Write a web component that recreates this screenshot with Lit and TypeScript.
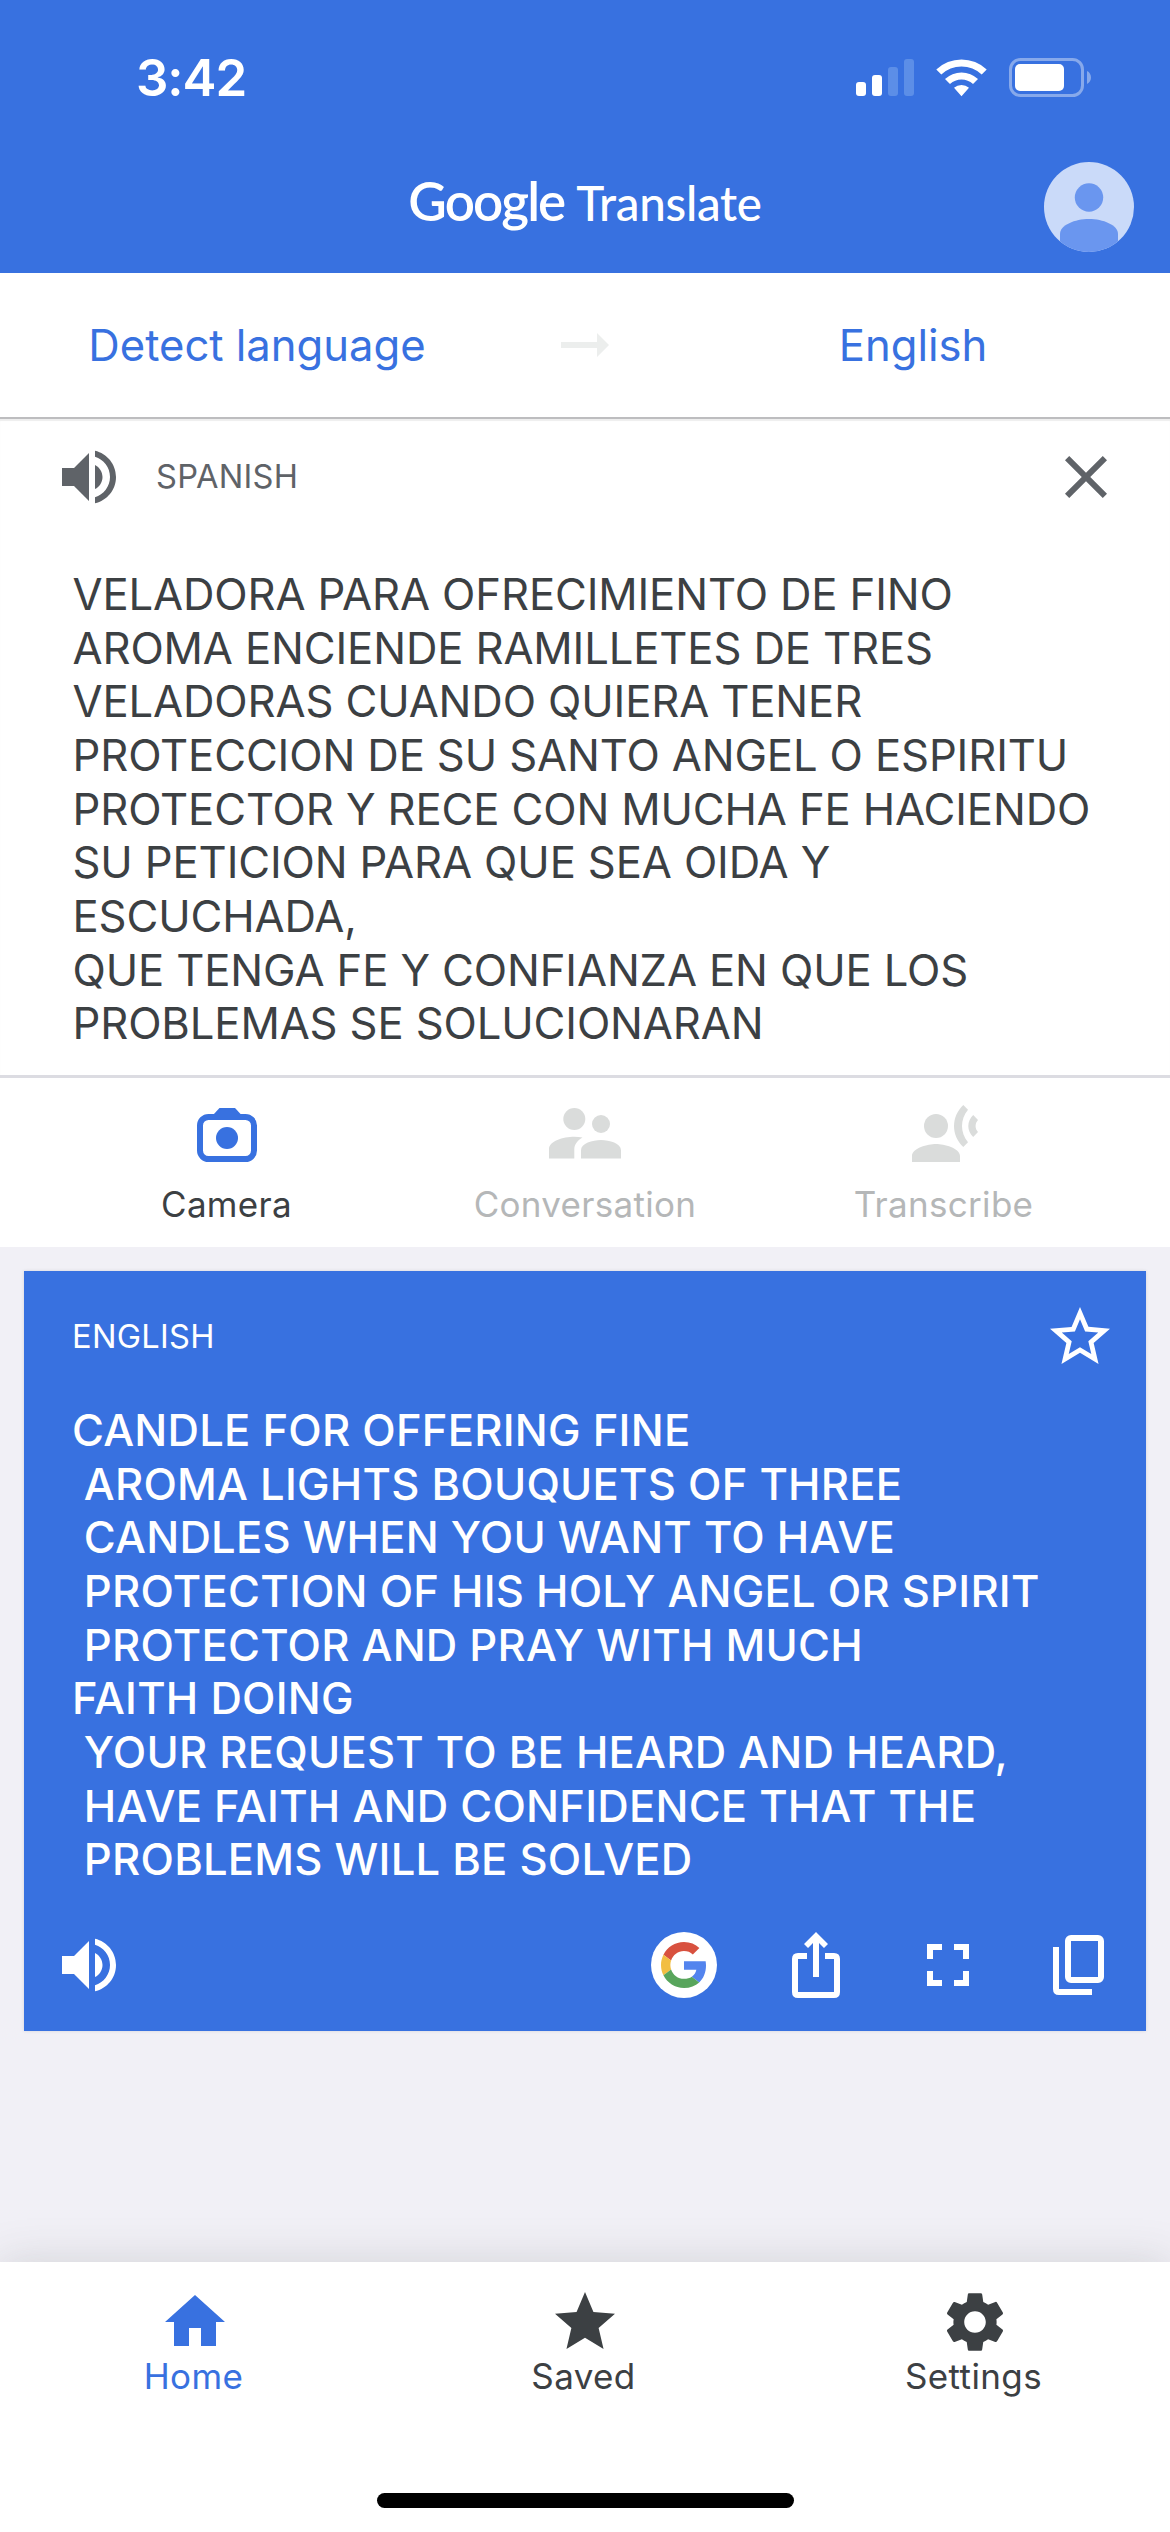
import { LitElement, html, css, svg } from "lit";
import { customElement } from "lit/decorators.js";

const SOURCE_TEXT = [
  "VELADORA PARA OFRECIMIENTO DE FINO",
  "AROMA ENCIENDE RAMILLETES DE TRES",
  "VELADORAS CUANDO QUIERA TENER",
  "PROTECCION DE SU SANTO ANGEL O ESPIRITU",
  "PROTECTOR Y RECE CON MUCHA FE HACIENDO",
  "SU PETICION PARA QUE SEA OIDA Y",
  "ESCUCHADA,",
  "QUE TENGA FE Y CONFIANZA EN QUE LOS",
  "PROBLEMAS SE SOLUCIONARAN",
].join("\n");

const RESULT_TEXT = [
  "CANDLE FOR OFFERING FINE",
  " AROMA LIGHTS BOUQUETS OF THREE",
  " CANDLES WHEN YOU WANT TO HAVE",
  " PROTECTION OF HIS HOLY ANGEL OR SPIRIT",
  " PROTECTOR AND PRAY WITH MUCH",
  "FAITH DOING",
  " YOUR REQUEST TO BE HEARD AND HEARD,",
  " HAVE FAITH AND CONFIDENCE THAT THE",
  " PROBLEMS WILL BE SOLVED",
].join("\n");

const glyph = (body: unknown) =>
  html`<svg class="icon" width="72" height="72" viewBox="0 0 24 24" fill="currentColor">${body}</svg>`;

const speaker = glyph(svg`<path d="M3 9v6h4l5 5V4L7 9H3zm13.5 3c0-1.77-1.02-3.29-2.5-4.03v8.05c1.48-.73 2.5-2.25 2.5-4.02zM14 3.23v2.06c2.89.86 5 3.54 5 6.71s-2.11 5.85-5 6.71v2.06c4.01-.91 7-4.49 7-8.77s-2.99-7.86-7-8.77z"/>`);
const close = glyph(svg`<path d="M19 6.41L17.59 5 12 10.59 6.41 5 5 6.41 10.59 12 5 17.59 6.41 19 12 13.41 17.59 19 19 17.59 13.41 12z"/>`);
const starOutline = glyph(svg`<path d="M22 9.24l-7.19-.62L12 2 9.19 8.63 2 9.24l5.46 4.73L5.82 21 12 17.27 18.18 21l-1.63-7.03L22 9.24zM12 15.4l-3.76 2.27 1-4.28-3.32-2.88 4.38-.38L12 6.1l1.71 4.04 4.38.38-3.32 2.88 1 4.28L12 15.4z"/>`);
const star = glyph(svg`<path d="M12 17.27L18.18 21l-1.64-7.03L22 9.24l-7.19-.61L12 2 9.19 8.63 2 9.24l5.46 4.73L5.82 21z"/>`);
const home = glyph(svg`<path d="M10 20v-6h4v6h5v-8h3L12 3 2 12h3v8z"/>`);
const gear = glyph(svg`<path d="M19.14 12.94c.04-.3.06-.61.06-.94 0-.32-.02-.64-.07-.94l2.03-1.58a.49.49 0 0 0 .12-.61l-1.92-3.32a.488.488 0 0 0-.59-.22l-2.39.96c-.5-.38-1.03-.7-1.62-.94l-.36-2.54a.484.484 0 0 0-.48-.41h-3.84c-.24 0-.43.17-.47.41l-.36 2.54c-.59.24-1.13.57-1.62.94l-2.39-.96c-.22-.08-.47 0-.59.22L2.74 8.87c-.12.21-.08.47.12.61l2.03 1.58c-.05.3-.09.63-.09.94s.02.64.07.94l-2.03 1.58a.49.49 0 0 0-.12.61l1.92 3.32c.12.22.37.29.59.22l2.39-.96c.5.38 1.03.7 1.62.94l.36 2.54c.05.24.24.41.48.41h3.84c.24 0 .44-.17.47-.41l.36-2.54c.59-.24 1.13-.56 1.62-.94l2.39.96c.22.08.47 0 .59-.22l1.92-3.32c.12-.22.07-.47-.12-.61l-2.01-1.58zM12 15.6c-1.98 0-3.6-1.62-3.6-3.6s1.62-3.6 3.6-3.6 3.6 1.62 3.6 3.6-1.62 3.6-3.6 3.6z"/>`);
const fullscreen = glyph(svg`<path d="M7 14H5v5h5v-2H7v-3zm-2-4h2V7h3V5H5v5zm12 7h-3v2h5v-5h-2v3zM14 5v2h3v3h2V5h-5z"/>`);

const share = html`<svg class="icon" width="72" height="72" viewBox="780 1929 72 72" fill="none" stroke="#fff" stroke-width="6">
  <path d="M807 1956h-9q-3 0-3 3v33q0 3 3 3h36q3 0 3-3v-33q0-3-3-3h-9"/>
  <path fill="#fff" stroke="none" d="M816 1932l12 12-4 4-5-5v34h-6v-34l-5 5-4-4z"/>
</svg>`;
const copy = html`<svg class="icon" width="72" height="72" viewBox="1044 1929 72 72" fill="none" stroke="#fff" stroke-width="6">
  <rect x="1068" y="1938" width="33" height="42" rx="3"/>
  <path d="M1056 1947v42q0 3 3 3h33"/>
</svg>`;
const googleG = html`<svg class="icon" width="72" height="72" viewBox="-36 -36 72 72">
  <circle r="33" fill="#fff"/>
  <g transform="translate(-23 -23) scale(.958)">
    <path fill="#d8513f" d="M24 9.5c3.54 0 6.71 1.22 9.21 3.6l6.85-6.85C35.9 2.38 30.47 0 24 0 14.62 0 6.51 5.38 2.56 13.22l7.98 6.19C12.43 13.72 17.74 9.5 24 9.5z"/>
    <path fill="#5384ee" d="M46.98 24.55c0-1.57-.15-3.09-.38-4.55H24v9.02h12.94c-.58 2.96-2.26 5.48-4.78 7.18l7.73 6c4.51-4.18 7.09-10.36 7.09-17.65z"/>
    <path fill="#f2be42" d="M10.53 28.59c-.48-1.45-.76-2.99-.76-4.59s.27-3.14.76-4.59l-7.98-6.19C.92 16.46 0 20.12 0 24c0 3.88.92 7.54 2.56 10.78l7.97-6.19z"/>
    <path fill="#58a55c" d="M24 48c6.48 0 11.93-2.13 15.89-5.81l-7.73-6c-2.15 1.45-4.92 2.3-8.16 2.3-6.26 0-11.57-4.22-13.47-9.91l-7.98 6.19C6.51 42.62 14.62 48 24 48z"/>
  </g>
</svg>`;

const camera = html`<svg class="icon" width="72" height="60" viewBox="191 1105 72 60" fill="#3871e0">
  <path d="M213 1115l6.500-7h15.500l6.500 7z"/>
  <rect x="200" y="1117" width="54" height="42" rx="8.500" fill="none" stroke="#3871e0" stroke-width="6"/>
  <circle cx="227" cy="1138" r="11"/>
</svg>`;
const people = html`<svg class="icon" width="78" height="60" viewBox="546 1105 78 60" fill="#dadcdb">
  <circle cx="574.300" cy="1119" r="11"/>
  <circle cx="601" cy="1124" r="9"/>
  <path d="M549 1158.500v-9.500c0-8 14-12.300 25.300-12.300 3 0 5.700.3 8.200.8-5.500 3.300-8.200 7.200-8.200 12v9zM581 1158.500v-8.300c0-6.700 11.500-10.200 20-10.200s20 3.500 20 10.200v8.300z"/>
</svg>`;
const voice = html`<svg class="icon" width="74" height="60" viewBox="905 1105 74 60" fill="#dadcdb">
  <circle cx="934" cy="1126" r="12"/>
  <path d="M910 1162v-6c0-8 16-12 24-12s24 4 24 12v6zM961.300 1105l4.700 4.800c-8 9.500-8 22.900 0 32.400l-4.700 4.800c-12.300-11.500-12.300-30.500 0-42zM971.200 1115l4.800 5c-3.200 3.500-3.200 8.500 0 12l-4.800 5c-6.500-6.500-6.500-15.500 0-22z"/>
</svg>`;

@customElement("app-root")
export class AppRoot extends LitElement {
  static styles = css`
    :host {
      display: flex;
      flex-direction: column;
      width: 1170px;
      height: 2532px;
      overflow: hidden;
      background: #f1f0f6;
      color: #3c4043;
      font-family: Inter, "Liberation Sans", sans-serif;
      font-size: 43.6px;
    }
    * { box-sizing: border-box; }
    svg { display: block; flex: none; }

    .top { height: 273px; background: #3871e0; color: #fff; }
    .status { height: 156px; display: flex; justify-content: space-between; padding: 45px 77px 0 136px; }
    .clock { font-size: 51px; font-weight: 600; line-height: 66px; letter-spacing: -1.1px; }
    .indicators { margin-top: 10px; }
    .bar { height: 102px; display: grid; grid-template-columns: 1fr auto 1fr; align-items: center; }
    .brand { grid-column: 2; display: flex; align-items: baseline; gap: 12px; font-family: Lato, Inter, sans-serif; line-height: 60px; margin-top: -10px; }
    .brand-name { font-size: 53px; font-weight: 600; letter-spacing: -1.9px; }
    .product { font-size: 47.5px; font-weight: 500; letter-spacing: -0.3px; }
    .avatar { justify-self: end; margin-right: 36px; }

    .languages { height: 144px; background: #fff; color: #3871e0; display: grid; grid-template-columns: 514px 142px 514px; align-items: center; justify-items: center; }
    .language { line-height: 54px; padding-top: 1px; }

    .source { background: #fff; border-top: 2px solid #bdbdbf; height: 661px; border-bottom: 3px solid #dcdce2; box-shadow: inset 0 2px 1px #eee; }
    .source-head { height: 116px; display: flex; align-items: center; padding: 0 48px 0 53px; color: #5f6368; }
    .tag { font-size: 32.6px; line-height: 40px; letter-spacing: 0.3px; margin-top: -3px; }
    .source .tag { margin-left: 31px; flex: 1; }
    .text { white-space: pre; line-height: 53.65px; }
    .source-text { padding: 33px 0 0 72.5px; letter-spacing: -0.12px; }

    .modes { height: 169px; background: #fff; display: grid; grid-template-columns: 406px 358px 406px; }
    .mode { display: flex; flex-direction: column; align-items: center; padding-top: 27px; font-size: 35px; line-height: 42px; letter-spacing: 0.3px; gap: 18px; }
    .mode.camera { margin-left: 47px; }
    .mode.voice { margin-right: 47px; }
    .off { color: #b5b7b8; }

    .card { margin: 24px 24px 0; height: 760px; background: #3871e0; color: #fff; box-shadow: 0 0 3px rgba(60, 64, 67, 0.15); display: flex; flex-direction: column; }
    .card-head { display: flex; justify-content: space-between; align-items: center; height: 72px; margin: 30px 30px 0 48px; }
    .card-text { font-weight: 500; margin: 31px 0 0 48px; letter-spacing: 0.22px; }
    .actions { display: flex; align-items: center; gap: 60px; margin: auto 30px 30px 29px; }
    .actions .spacer { flex: 1; }

    .nav { margin-top: auto; height: 270px; background: #fff; box-shadow: 0 0 42px rgba(60, 64, 67, 0.17); display: flex; flex-direction: column; align-items: center; justify-content: space-between; }
    .tabs { width: 1170px; display: grid; grid-template-columns: repeat(3, 390px); padding-top: 24px; }
    .tab { display: flex; flex-direction: column; align-items: center; font-size: 35px; line-height: 42px; letter-spacing: 0.4px; }
    .tab.active { color: #3871e0; }
    .tab .label { margin-top: -3px; padding-right: 3px; }
    .pill { width: 417px; height: 15px; border-radius: 8px; background: #000; margin-bottom: 24px; }
  `;

  render() {
    return html`
      <header class="top">
        <div class="status">
          <div class="clock">3:42</div>
          <svg class="indicators" width="240" height="45" viewBox="853 55 240 45" fill="#fff">
            <rect x="856" y="82" width="10" height="14" rx="3"/>
            <rect x="872" y="75" width="10" height="21" rx="3"/>
            <g fill="#5c8ee7"><rect x="888" y="67" width="10" height="29" rx="3"/><rect x="904" y="59" width="10" height="37" rx="3"/></g>
            <path d="M936.300 69.500a36.500 36.500 0 0 1 50.400 0l-5 5a29.300 29.300 0 0 0-40.400 0zM945 79a24 24 0 0 1 33 0l-5 5a16.800 16.800 0 0 0-23 0zM954 87.800a11.500 11.500 0 0 1 15 0l-7.500 8.400z"/>
            <rect x="1010.500" y="59.500" width="72" height="36" rx="10" fill="none" stroke="#87a9eb" stroke-width="3"/>
            <rect x="1015" y="64" width="49" height="27" rx="5"/>
            <path fill="#87a9eb" d="M1087 71c5.300 2.300 5.300 10.500 0 13z"/>
          </svg>
        </div>
        <div class="bar">
          <div class="brand"><span class="brand-name">Google</span><span class="product">Translate</span></div>
          <svg class="avatar" width="90" height="90" viewBox="-45 -45 90 90">
            <defs><clipPath id="disc"><circle r="45"/></clipPath></defs>
            <circle r="45" fill="#cadaf9"/>
            <g fill="#6a96ef" clip-path="url(#disc)"><circle cy="-9.500" r="14.200"/><path d="M-29 50V27C-29 18-14 12 0 12s29 6 29 15v23z"/></g>
          </svg>
        </div>
      </header>

      <div class="languages">
        <span class="language">Detect language</span>
        <svg width="48" height="24" viewBox="0 0 48 24" fill="#eceeed"><path d="M0 9h36V0l12 12-12 12v-9H0z"/></svg>
        <span class="language">English</span>
      </div>

      <section class="source">
        <div class="source-head">${speaker}<span class="tag">SPANISH</span>${close}</div>
        <div class="text source-text">${SOURCE_TEXT}</div>
      </section>

      <div class="modes">
        <div class="mode camera">${camera}<span>Camera</span></div>
        <div class="mode off">${people}<span>Conversation</span></div>
        <div class="mode voice off">${voice}<span>Transcribe</span></div>
      </div>

      <section class="card">
        <div class="card-head"><span class="tag">ENGLISH</span>${starOutline}</div>
        <div class="text card-text">${RESULT_TEXT}</div>
        <div class="actions">${speaker}<span class="spacer"></span>${googleG}${share}${fullscreen}${copy}</div>
      </section>

      <nav class="nav">
        <div class="tabs">
          <div class="tab active">${home}<span class="label">Home</span></div>
          <div class="tab">${star}<span class="label">Saved</span></div>
          <div class="tab">${gear}<span class="label">Settings</span></div>
        </div>
        <div class="pill"></div>
      </nav>
    `;
  }
}
